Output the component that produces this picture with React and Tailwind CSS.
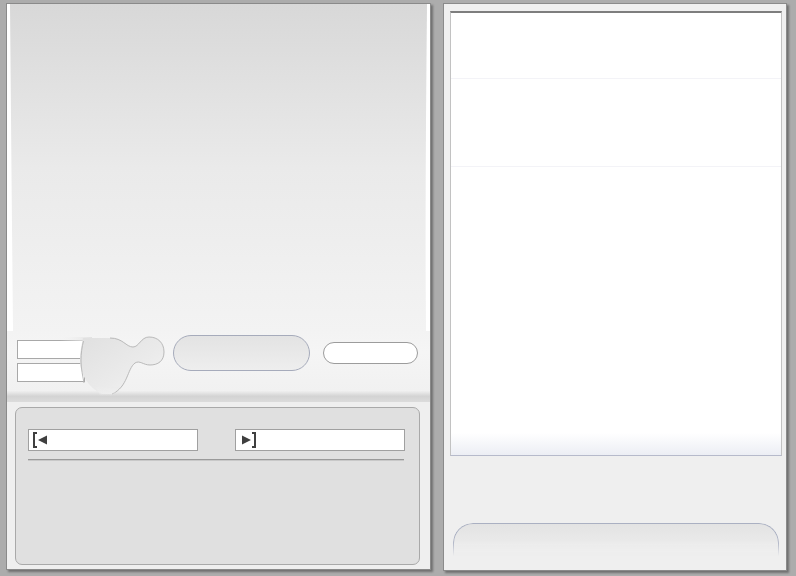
import React from 'react';

function SkipIcon({ dir }) {
  // bracket + triangle glyph used by the two range inputs
  return dir === 'start' ? (
    <svg width="18" height="18" viewBox="0 0 18 18" className="block">
      <path d="M1 1 H5 V3 H3 V15 H5 V17 H1 Z" fill="#3f3f3f" />
      <path d="M6 9 L15 4.5 V13.5 Z" fill="#3f3f3f" />
    </svg>
  ) : (
    <svg width="18" height="18" viewBox="0 0 18 18" className="block">
      <path d="M3 4.5 L12 9 L3 13.5 Z" fill="#3f3f3f" />
      <path d="M13 1 H17 V17 H13 V15 H15 V3 H13 Z" fill="#3f3f3f" />
    </svg>
  );
}

function Pin() {
  return (
    <svg
      width="110"
      height="66"
      viewBox="60 330 110 66"
      className="absolute left-[53px] top-0 pointer-events-none"
    >
      <defs>
        <linearGradient id="pinFill" x1="0" y1="0" x2="1" y2="1">
          <stop offset="0" stopColor="#e0e0e0" />
          <stop offset="0.6" stopColor="#ebebeb" />
          <stop offset="1" stopColor="#f6f6f6" />
        </linearGradient>
        <linearGradient id="pinFade" x1="0" y1="0" x2="1" y2="0">
          <stop offset="0" stopColor="#f3f3f3" stopOpacity="0" />
          <stop offset="1" stopColor="#e2e2e2" />
        </linearGradient>
        <linearGradient id="pinBottom" x1="0" y1="0" x2="0" y2="1">
          <stop offset="0" stopColor="#ebebeb" />
          <stop offset="1" stopColor="#f2f2f2" stopOpacity="0" />
        </linearGradient>
      </defs>
      <rect x="60" y="336" width="32" height="4" fill="url(#pinFade)" />
      <path
        d="M83 337 L110 337 C123 337 126 346 133 346 C139 346 141 336 149 336 C158 336 164 342 164 351 C164 360 158 364 150 364 C143 364 140 359 135 362 C127 368 128 386 112 393 L102 393 C88 387 80 372 80 360 C80 350 82 343 83 337 Z"
        fill="url(#pinFill)"
      />
      <path
        d="M110 337 C123 337 126 346 133 346 C139 346 141 336 149 336 C158 336 164 342 164 351 C164 360 158 364 150 364 C143 364 140 359 135 362 C127 368 128 386 112 393"
        fill="none"
        stroke="#b2b2b2"
        strokeWidth="0.9"
      />
      <path
        d="M83.5 340 C82 346 81 352 81 360 C81 368 83 376 84 382"
        fill="none"
        stroke="#b4b4b4"
        strokeWidth="0.9"
      />
      <path d="M96 386 L120 386 L112 395 L100 395 Z" fill="url(#pinBottom)" />
    </svg>
  );
}

function LeftPanel() {
  return (
    <div className="w-[425px] h-[567px] border border-[#8a8a8a] bg-[#efefef] flex flex-col shadow-[2px_2px_2px_rgba(0,0,0,0.35)]">
      {/* --- display area with curled edges --- */}
      <div className="relative h-[327px] bg-gradient-to-b from-[#d8d8d8] via-[#eaeaea] to-[#f3f3f3]">
        <svg
          className="absolute inset-0 w-full h-full"
          viewBox="0 0 423 327"
          preserveAspectRatio="none"
        >
          <path d="M0 0 L3 0 C4 110 5 220 6 327 L0 327 Z" fill="#ffffff" />
          <path d="M423 0 L420 0 C419 110 418 220 419 327 L423 327 Z" fill="#ffffff" />
        </svg>
      </div>

      {/* --- control strip --- */}
      <div className="relative h-[71px] flex items-start bg-[linear-gradient(to_bottom,#f3f3f3_0%,#f5f5f5_30%,#f1f1f1_84%,#d3d3d3_92%,#dcdcdc_100%)]">
        <div className="ml-[10px] mt-[9px] flex flex-col gap-[4px]">
          <div className="w-[68px] h-[19px] bg-white border border-[#a8a8a8]" />
          <div className="w-[68px] h-[19px] bg-white border border-[#a8a8a8]" />
        </div>
        <Pin />
        <div className="ml-[88px] mt-[4px] w-[137px] h-[36px] rounded-full border border-[#a6abbb] bg-gradient-to-b from-[#e3e3e3] to-[#eeeeee]" />
        <div className="ml-[13px] mt-[11px] w-[95px] h-[22px] rounded-full border border-[#9c9c9c] bg-white" />
      </div>

      {/* --- range box --- */}
      <div className="flex-1 pl-[8px] pr-[10px] pt-[5px] pb-[4px]">
        <div className="h-full rounded-[7px] border border-[#a9a9a9] bg-[#e0e0e0] px-[12px] pt-[21px]">
          <div className="flex justify-between pr-[2px]">
            <div className="w-[170px] h-[22px] bg-white border border-[#a0a0a0] flex items-center pl-[3px]">
              <SkipIcon dir="start" />
            </div>
            <div className="w-[170px] h-[22px] bg-white border border-[#a0a0a0] flex items-center pl-[3px]">
              <SkipIcon dir="end" />
            </div>
          </div>
          <div className="mt-[8px] h-[2px] w-[376px] bg-[#9a9a9a] border-b border-[#c8c8c8]" />
        </div>
      </div>
    </div>
  );
}

function RightPanel() {
  return (
    <div className="w-[344px] h-[568px] border border-[#8a8a8a] bg-[#efefef] flex flex-col pl-[6px] pr-[4px] pt-[7px] pb-[14px] shadow-[2px_2px_2px_rgba(0,0,0,0.35)]">
      <div className="h-[445px] flex flex-col border-x border-[#c2c2c2] border-t-2 border-t-[#7e7e7e] border-b border-b-[#b6bacb] bg-[linear-gradient(to_bottom,#ffffff_0%,#ffffff_95%,#eceef4_100%)]">
        <div className="h-[66px] border-b border-[#f3f3f7]" />
        <div className="h-[88px] border-b border-[#f3f3f7]" />
      </div>
      <div className="flex-1" />
      <div className="mx-[3px] h-[33px] rounded-t-[20px] border-t border-x border-[#aab0c2] bg-gradient-to-b from-[#e3e3e3] to-[#efefef] [mask-image:linear-gradient(to_bottom,black_55%,transparent)]" />
    </div>
  );
}

export default function App() {
  return (
    <div className="w-[796px] h-[576px] bg-[#acacac] flex items-start pl-[6px] pt-[3px] gap-[12px] overflow-hidden">
      <LeftPanel />
      <RightPanel />
    </div>
  );
}
